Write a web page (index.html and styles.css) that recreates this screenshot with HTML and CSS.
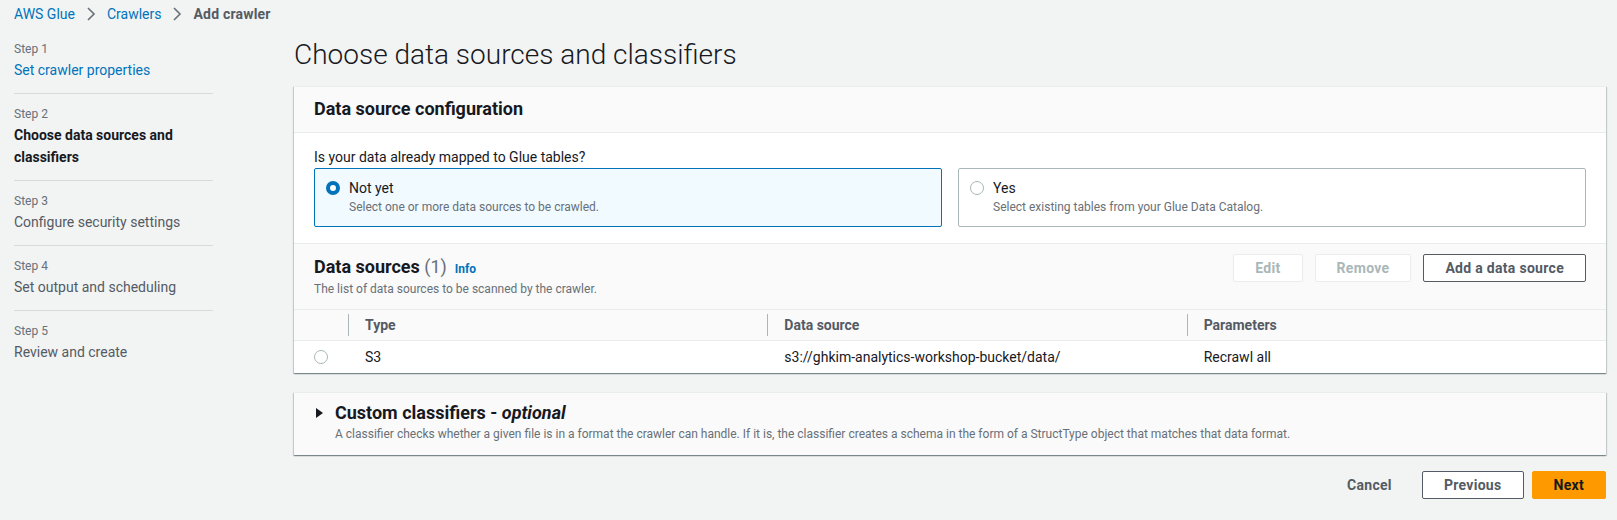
FILE: index.html
```html
<!DOCTYPE html>
<html lang="en">
<head>
<meta charset="utf-8">
<title>Add crawler</title>
<link rel="stylesheet" href="styles.css">
</head>
<body>
<div class="page">
  <nav class="crumbs">
    <a class="crumb-link">AWS Glue</a>
    <svg class="chev" width="16" height="16" viewBox="0 0 16 16"><path d="M5 2l6 6-6 6"/></svg>
    <a class="crumb-link">Crawlers</a>
    <svg class="chev" width="16" height="16" viewBox="0 0 16 16"><path d="M5 2l6 6-6 6"/></svg>
    <span class="crumb-current">Add crawler</span>
  </nav>

  <div class="layout">
    <aside class="steps">
      <div class="step">
        <div class="step-label">Step 1</div>
        <div class="step-title link">Set crawler properties</div>
      </div>
      <div class="step">
        <div class="step-label">Step 2</div>
        <div class="step-title current">Choose data sources and classifiers</div>
      </div>
      <div class="step">
        <div class="step-label">Step 3</div>
        <div class="step-title">Configure security settings</div>
      </div>
      <div class="step">
        <div class="step-label">Step 4</div>
        <div class="step-title">Set output and scheduling</div>
      </div>
      <div class="step last">
        <div class="step-label">Step 5</div>
        <div class="step-title">Review and create</div>
      </div>
    </aside>

    <main class="main">
      <h1 class="title">Choose data sources and classifiers</h1>

      <section class="container">
        <div class="container-header">
          <h2 class="h2">Data source configuration</h2>
        </div>
        <div class="config-body">
          <div class="field-label">Is your data already mapped to Glue tables?</div>
          <div class="tiles">
            <div class="tile selected">
              <span class="radio on"></span>
              <div class="tile-text">
                <div class="tile-label">Not yet</div>
                <div class="tile-desc">Select one or more data sources to be crawled.</div>
              </div>
            </div>
            <div class="tile">
              <span class="radio"></span>
              <div class="tile-text">
                <div class="tile-label">Yes</div>
                <div class="tile-desc">Select existing tables from your Glue Data Catalog.</div>
              </div>
            </div>
          </div>
        </div>

        <div class="table-header">
          <div class="table-heading">
            <h2 class="h2">Data sources <span class="count">(1)</span><a class="info">Info</a></h2>
            <p class="desc">The list of data sources to be scanned by the crawler.</p>
          </div>
          <div class="actions">
            <button class="btn disabled">Edit</button>
            <button class="btn disabled">Remove</button>
            <button class="btn normal">Add a data source</button>
          </div>
        </div>

        <div class="table">
          <div class="thead">
            <div class="th-select"></div>
            <div class="th"><span class="th-in">Type</span></div>
            <div class="th"><span class="th-in">Data source</span></div>
            <div class="th"><span class="th-in">Parameters</span></div>
          </div>
          <div class="trow">
            <div class="td-select"><span class="radio"></span></div>
            <div class="td">S3</div>
            <div class="td">s3://ghkim-analytics-workshop-bucket/data/</div>
            <div class="td">Recrawl all</div>
          </div>
        </div>
      </section>

      <section class="container expand">
        <div class="expand-head">
          <svg class="caret" width="14" height="16" viewBox="0 0 14 16"><path d="M2 3L9 8L2 13Z"/></svg>
          <h2 class="h2">Custom classifiers - <em>optional</em></h2>
        </div>
        <p class="desc expand-desc">A classifier checks whether a given file is in a format the crawler can handle. If it is, the classifier creates a schema in the form of a StructType object that matches that data format.</p>
      </section>

      <div class="footer">
        <button class="btn link-btn">Cancel</button>
        <button class="btn normal">Previous</button>
        <button class="btn primary">Next</button>
      </div>
    </main>
  </div>
</div>
</body>
</html>
```

FILE: styles.css
```css
* { box-sizing: border-box; }

html, body {
  margin: 0;
  padding: 0;
  background: #f2f3f3;
}

body {
  font-family: Roboto, "Liberation Sans", Arial, sans-serif;
  font-size: 14px;
  line-height: 20px;
  color: #16191f;
}

.page {
  padding: 0 11px 0 14px;
}

/* Breadcrumbs */
.crumbs {
  height: 28px;
  display: flex;
  align-items: center;
}

.crumb-link {
  color: #0073bb;
  text-decoration: none;
}

.crumb-current {
  color: #545b64;
  font-weight: 700;
  letter-spacing: 0.2px;
}

.chev {
  margin: 0 8px 0 8px;
  fill: none;
  stroke: #687078;
  stroke-width: 1.6;
}

/* Layout */
.layout {
  display: grid;
  grid-template-columns: 199px 1fr;
  column-gap: 81px;
}

/* Steps */
.steps {
  margin-top: 1px;
}

.step {
  padding: 12px 0;
  border-bottom: 1px solid #d5dbdb;
}

.step.last {
  border-bottom: none;
}

.step-label {
  font-size: 12px;
  line-height: 16px;
  color: #687078;
}

.step-title {
  margin-top: 2px;
  line-height: 22px;
  color: #545b64;
}

.step-title.link {
  color: #0073bb;
}

.step-title.current {
  color: #16191f;
  font-weight: 700;
}

/* Main */
.title {
  margin: 11px 0 15px;
  font-size: 28px;
  line-height: 32px;
  font-weight: 300;
  color: #16191f;
}

.container {
  background: #ffffff;
  border-top: 1px solid #eaeded;
  box-shadow: 0 1px 1px 0 rgba(0, 28, 36, 0.3), 1px 1px 1px 0 rgba(0, 28, 36, 0.15), -1px 1px 1px 0 rgba(0, 28, 36, 0.15);
}

.container-header {
  background: #fafafa;
  padding: 11px 20px 12px;
  border-bottom: 1px solid #eaeded;
}

.h2 {
  margin: 0;
  font-size: 18px;
  line-height: 22px;
  font-weight: 700;
  color: #16191f;
}

.config-body {
  padding: 14px 20px 16px;
}

.field-label {
  line-height: 20px;
  margin-bottom: 1px;
  color: #16191f;
}

.tiles {
  display: grid;
  grid-template-columns: 1fr 1fr;
  column-gap: 16px;
}

.tile {
  display: flex;
  align-items: flex-start;
  gap: 9px;
  padding: 9px 11px 11px;
  border: 1px solid #aab7b8;
  border-radius: 2px;
  background: #ffffff;
}

.tile.selected {
  border-color: #0073bb;
  background: #f1faff;
}

.radio {
  flex: none;
  display: inline-block;
  width: 14px;
  height: 14px;
  border-radius: 50%;
  border: 1.5px solid #aab7b8;
  background: #ffffff;
}

.tile .radio {
  margin-top: 3px;
}

.radio.on {
  border: 4px solid #0073bb;
}

.tile-label {
  line-height: 20px;
}

.tile-desc {
  margin-top: 1px;
  font-size: 12px;
  line-height: 16px;
  color: #687078;
}

/* Table header */
.table-header {
  display: flex;
  justify-content: space-between;
  align-items: flex-start;
  padding: 10px 20px 12px;
  background: #fafafa;
  border-top: 1px solid #eaeded;
  border-bottom: 1px solid #eaeded;
}

.table-heading {
  padding-top: 2px;
}

.count {
  font-weight: 400;
  color: #687078;
}

.info {
  margin-left: 8px;
  font-size: 12px;
  font-weight: 700;
  color: #0073bb;
  text-decoration: none;
}

.desc {
  margin: 1px 0 0;
  font-size: 12px;
  line-height: 16px;
  color: #687078;
}

.actions {
  display: flex;
  gap: 12px;
}

.btn {
  height: 28px;
  display: inline-flex;
  align-items: center;
  justify-content: center;
  padding: 0 21px;
  border-radius: 2px;
  font-family: inherit;
  font-size: 14px;
  font-weight: 700;
  line-height: 20px;
  letter-spacing: 0.3px;
  border: 1px solid #545b64;
  background: #ffffff;
  color: #545b64;
}

.btn.disabled {
  border-color: #eaeded;
  color: #aab7b8;
}

.btn.link-btn {
  border-color: transparent;
  background: transparent;
}

.btn.primary {
  background: #ff9900;
  border-color: #ff9900;
  color: #16191f;
}

/* Table */
.thead,
.trow {
  display: grid;
  grid-template-columns: 54px 1fr 1fr 1fr;
}

.thead {
  height: 31px;
  background: #fafafa;
  border-bottom: 1px solid #eaeded;
  align-items: center;
}

.th-in {
  display: block;
  height: 22px;
  line-height: 22px;
  padding-left: 16px;
  border-left: 1px solid #aab7b8;
  font-weight: 700;
  color: #545b64;
}

.trow {
  height: 32px;
  align-items: center;
}

.td-select {
  display: flex;
  justify-content: center;
}

.td {
  padding-left: 17px;
  color: #16191f;
}

/* Expandable container */
.expand {
  margin-top: 19px;
  background: #fafafa;
  padding: 9px 20px 13px;
}

.expand-head {
  display: flex;
  align-items: center;
  gap: 7px;
}

.caret {
  flex: none;
  fill: #16191f;
}

.h2 em {
  font-style: italic;
}

.expand-desc {
  margin-top: 2px;
  padding-left: 21px;
}

/* Footer */
.footer {
  display: flex;
  justify-content: flex-end;
  gap: 8px;
  margin-top: 16px;
}
```
